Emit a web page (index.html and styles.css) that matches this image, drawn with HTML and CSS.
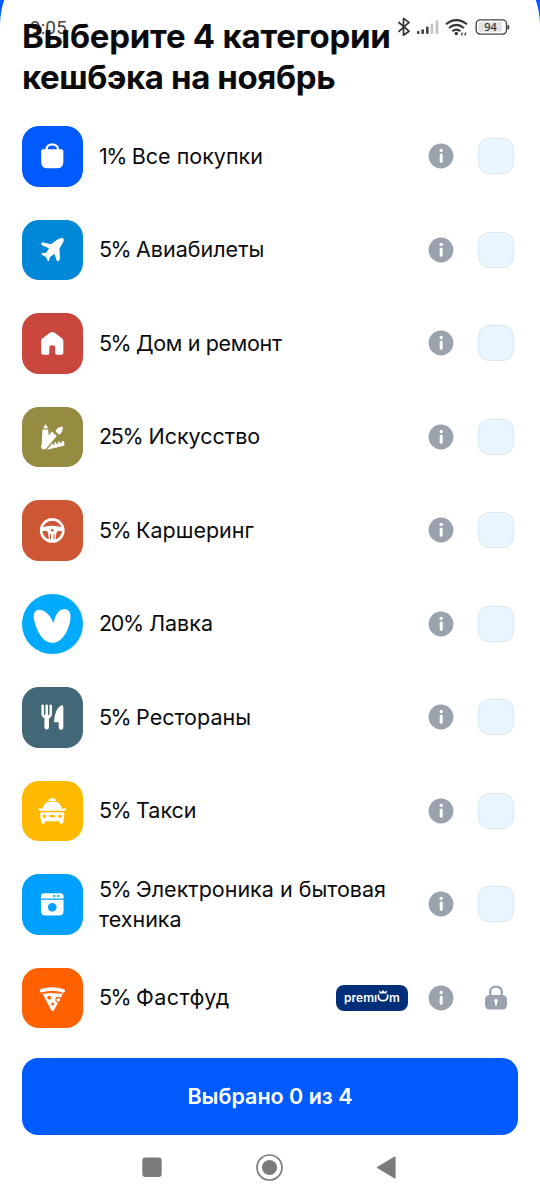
FILE: index.html
```html
<!DOCTYPE html>
<html lang="ru">
<head>
<meta charset="utf-8">
<title>Категории кешбэка</title>
<link rel="stylesheet" href="styles.css">
</head>
<body>
<svg class="defs" width="0" height="0">
  <symbol id="info" viewBox="0 0 26 26"><circle cx="13" cy="13" r="12.4" fill="#99a2ad"/><circle cx="13.2" cy="7.4" r="1.7" fill="#fff"/><path d="M13.2 12v6.2" stroke="#fff" stroke-width="3" stroke-linecap="round"/></symbol>
</svg>
<main class="sheet">
  <div class="status">
    <span class="time">9:05</span>
    <svg class="status-icons" width="116" height="22" viewBox="395 16 116 22">
      <path d="M398.400 22l10.600 9.200-5.500 4V18.400l5.500 4-10.600 9.400" fill="none" stroke="#333" stroke-width="1.700" stroke-linejoin="round"/>
      <g fill="#444"><rect x="417" y="31" width="2.600" height="3" rx="1"/><rect x="421.400" y="29.200" width="2.600" height="4.800" rx="1"/><rect x="426" y="26.500" width="2.600" height="7.500" rx="1"/></g>
      <g fill="#c4c4c4"><rect x="430.600" y="23.400" width="2.600" height="10.600" rx="1"/><rect x="435.600" y="20.600" width="2.700" height="13.400" rx="1"/></g>
      <g fill="none" stroke="#333" stroke-width="2"><path d="M446 24.300Q456.300 16 467 24.300"/><path d="M449 28Q456.300 21.800 464 28"/><path d="M452.300 31.300Q456.300 28 460.400 31.300"/></g>
      <circle cx="456.300" cy="33.500" r="1.700" fill="#333"/><path d="M461.500 35.500l1-3M464.800 35.500l1-3" fill="none" stroke="#555" stroke-width="1.500"/>
      <rect x="476.200" y="19.900" width="30.300" height="14.200" rx="4" fill="#fff" stroke="#444" stroke-width="1.400"/><rect x="478.500" y="22" width="23.500" height="10" rx="2" fill="#e2e2e2"/><rect x="507.300" y="25" width="2" height="4.500" rx="1" fill="#444"/>
      <text x="484.300" y="31" class="charge">94</text>
    </svg>
  </div>
  <h1 class="title"><span class="t1">Выберите 4 категории</span><br><span class="t2">кешбэка на ноябрь</span></h1>
  <ul class="list">
    <li class="row">
      <svg class="icon bag" viewBox="0 0 60 60"><path d="M24.300 26v-2.500c0-7 11.400-7 11.400 0V26" fill="none" stroke="#fff" stroke-width="2.200"/><path d="M19 25q0-2 2-2h18q2 0 2 2v10.500q0 6.500-6.500 6.500h-9Q19 42 19 35.500z" fill="#fff"/></svg>
      <span class="label"><span class="pct">1%</span> Все покупки</span><svg class="info"><use href="#info"/></svg><span class="check"></span>
    </li>
    <li class="row">
      <svg class="icon plane" viewBox="0 0 60 60"><path d="M28.800 24L34.800 19.600Q38.500 17.200 40.800 18.200Q42.300 20 40 23.600L37.200 28.200L37.600 38.500Q37.400 40.800 35.800 41Q34.600 41 34.200 39.600L32.200 33.600L27.800 36.600L27 40Q26.200 41.600 25.200 40L23.800 36.800L20 34.800Q18.600 33.600 20 32.800L24 32.400L26.800 28L20.400 25.400Q18.400 24 19.400 22.600Q20 22 21.400 22.200z" fill="#fff"/></svg>
      <span class="label"><span class="pct">5%</span> Авиабилеты</span><svg class="info"><use href="#info"/></svg><span class="check"></span>
    </li>
    <li class="row">
      <svg class="icon home" viewBox="0 0 60 60"><path d="M19 28q0-1.800 1.400-3l7.200-5.400q2.400-1.500 4.800 0l7.200 5.400Q41 26.200 41 28v11.500q0 2-2 2h-4.600q-1.500 0-1.500-1.500v-5.500q0-2.400-2.900-2.400t-2.900 2.400V40q0 1.500-1.500 1.500H21q-2 0-2-2z" fill="#fff"/></svg>
      <span class="label"><span class="pct">5%</span> <span class="tight">Дом и ремонт</span></span><svg class="info"><use href="#info"/></svg><span class="check"></span>
    </li>
    <li class="row">
      <svg class="icon art" viewBox="0 0 60 60"><g fill="#fff"><path d="M23.300 16.800l2.600 4.200h-5z"/><path d="M20.200 22.200h5.800l.5 6.200-7 9.400z"/><path d="M29.600 24.300l4.900 4.400-10.300 12.200q-2.200 2-4.500.5-1.400-2-.1-4.200z"/><path d="M33.400 24.200q1-4.200 7-4.900.4 6.200-3.600 8.100z"/><path d="M24.600 42.300l5.600-6.400.8 1.600 1.500-.3-.5-2 1.700-.4.700 2 1.600-.4-.6-2 1.600-.5.800 2 1.700-.3-.6-1.400 2-.4q1 .4 1.200 2.200.4 2.200-1.300 2.800z"/></g></svg>
      <span class="label"><span class="pct two">25%</span> Искусство</span><svg class="info"><use href="#info"/></svg><span class="check"></span>
    </li>
    <li class="row">
      <svg class="icon wheel" viewBox="0 0 60 60"><circle cx="30" cy="30.200" r="11" fill="none" stroke="#fff" stroke-width="2.600"/><path d="M19.500 27.300q10.500-3.600 21 0v3.500h-4.200q-1.800 0-2.200 2l-.9 8h-6.400l-.9-8q-.4-2-2.200-2h-4.200z" fill="#fff"/><circle cx="30" cy="30" r="1.300" fill="#cd5734"/><path d="M28.300 34v5M31.700 34v5" stroke="#cd5734"/></svg>
      <span class="label"><span class="pct">5%</span> Каршеринг</span><svg class="info"><use href="#info"/></svg><span class="check"></span>
    </li>
    <li class="row">
      <svg class="icon heart" viewBox="0 0 60 60"><path d="M31.300 28.800C28.500 22 23 15 16.500 15.600 11 16.500 11 22 12.300 27c2.200 9 8 21.400 17.900 21.400 11.500 0 18.300-17.300 17.900-26.900C48 17 45 14.800 41.200 15 35.500 15.500 33 21.500 31.300 28.800z" fill="#fff"/></svg>
      <span class="label"><span class="pct two">20%</span> Лавка</span><svg class="info"><use href="#info"/></svg><span class="check"></span>
    </li>
    <li class="row">
      <svg class="icon food" viewBox="0 0 60 60"><path d="M20.500 18.500v8q0 3.500 4 3.500t4-3.500v-8M24.500 18.500v10" fill="none" stroke="#fff" stroke-width="2.500" stroke-linecap="round"/><path d="M24.500 29v11" stroke="#fff" stroke-width="4.500" stroke-linecap="round"/><path d="M41 20v20.500q0 2-2.300 2t-2.300-2V35h-4q-.7 0-.6-1 .8-12 6.800-15.600Q41 17.500 41 20z" fill="#fff"/></svg>
      <span class="label"><span class="pct">5%</span> Рестораны</span><svg class="info"><use href="#info"/></svg><span class="check"></span>
    </li>
    <li class="row">
      <svg class="icon taxi" viewBox="0 0 60 60"><path d="M26.300 19.800q0-2.800 3.700-2.800t3.700 2.800z" fill="#fff"/><path d="M26.500 20.500h7q3.200.3 4.800 3.500l1.400 3.500 3.500-.4q.8.200.3 1.300-.6 1.200-2 1.200h-23q-1.400 0-2-1.200-.5-1.100.3-1.300l3.500.4 1.400-3.500q1.600-3.200 4.800-3.500z" fill="#fff"/><path d="M18.800 31h22.400q.8 1.500.8 3.500l-1 6.400q-.3 1.600-2 1.600t-1.800-1.700V40H22.800v.8q-.1 1.700-1.800 1.700t-2-1.600l-1-6.400q0-2 .8-3.500z" fill="#fff"/><g fill="#ffba00"><circle cx="22.300" cy="34.900" r="1.700"/><circle cx="37.700" cy="34.900" r="1.700"/><rect x="26.800" y="33.800" width="6.400" height="2.200" rx="1.100"/></g></svg>
      <span class="label"><span class="pct">5%</span> Такси</span><svg class="info"><use href="#info"/></svg><span class="check"></span>
    </li>
    <li class="row">
      <svg class="icon washer" viewBox="0 0 60 60"><path d="M18.800 24.200v-2q0-3.200 3.200-3.200h16q3.200 0 3.200 3.200v2zM18.800 25.600h22.400v11.100q0 4.500-4.500 4.500H23.300q-4.500 0-4.500-4.500z" fill="#fff"/><circle cx="30" cy="33" r="4.300" fill="#00a0ff"/><circle cx="32" cy="21.900" r="1.100" fill="#00a0ff"/><circle cx="36" cy="21.900" r="1.100" fill="#00a0ff"/></svg>
      <span class="label"><span class="pct">5%</span> Электроника и бытовая<br>техника</span><svg class="info"><use href="#info"/></svg><span class="check"></span>
    </li>
    <li class="row">
      <svg class="icon pizza" viewBox="0 0 60 60"><path d="M20 24.700l21-.2-9 17q-1.600 2.600-3.200 0z" fill="#fff"/><path d="M19.300 22.500q10.700-3.400 21.700.2" fill="none" stroke="#fff" stroke-width="3.300" stroke-linecap="round"/><path d="M20 25.300q10-2.400 20 .3" fill="none" stroke="#ff6000" stroke-width=".8"/><circle cx="27" cy="29.400" r="1.900" fill="#ff6000"/><circle cx="36" cy="31.500" r="2.400" fill="#fff" stroke="#ff6000" stroke-width="1.100"/><circle cx="30.500" cy="35.700" r="1.500" fill="#ff6000"/></svg>
      <span class="label"><span class="pct">5%</span> <span class="loose">Фастфуд</span></span>
      <span class="premium"><span>premı</span><svg width="12" height="13" viewBox="0 0 12 13"><path d="M1.400 4.600v1.800q0 4.300 4.600 4.300t4.600-4.300V4.600" fill="none" stroke="#fff" stroke-width="1.700"/><path d="M1.800.6l2.400 1.300L6 0l1.800 1.900L10.200.6 9.400 3.500H2.600z" fill="#fff"/></svg><span>m</span></span>
      <svg class="info"><use href="#info"/></svg>
      <svg class="lock" viewBox="0 0 36 36"><path d="M12.200 16v-4.200c0-7 11.600-7 11.600 0V16" fill="none" stroke="#99a2ad" stroke-width="2.300"/><rect x="7" y="15" width="22" height="14.500" rx="4.500" fill="#99a2ad"/><circle cx="18" cy="20.800" r="1.800" fill="#fff"/><path d="M18 21v3.700" stroke="#fff" stroke-width="2" stroke-linecap="round"/></svg>
    </li>
  </ul>
  <button class="submit"><span>Выбрано 0 из 4</span></button>
  <svg class="nav" width="540" height="65" viewBox="0 1135 540 65" fill="#7b7b7b"><rect x="142.300" y="1157.500" width="19.400" height="19.500" rx="3"/><circle cx="269.500" cy="1167.500" r="12.500" fill="none" stroke="#7b7b7b" stroke-width="1.700"/><circle cx="269.500" cy="1167.500" r="7.600"/><path d="M377.500 1167.500l17.500-10.500v21z" stroke="#7b7b7b" stroke-width="1.200" stroke-linejoin="round"/></svg>
</main>
</body>
</html>
```

FILE: styles.css
```css
* { box-sizing: border-box; }
body { margin: 0; background: #005bff; font-family: Inter, "Noto Sans", sans-serif; color: #0b0b0d; }
.defs { position: absolute; }
.sheet { position: relative; width: 540px; height: 1218px; margin-top: -18px; padding-top: 18px; overflow: hidden; background: #fff; border-radius: 22px 22px 0 0 / 44px 44px 0 0; }
.status { position: absolute; top: 34px; left: 30px; right: 29px; display: flex; justify-content: space-between; height: 22px; }
.time { font: 400 19px/23px Roboto, sans-serif; color: #444; }
.charge { font: 500 11px "Noto Sans", sans-serif; fill: #333; }
.title { position: relative; margin: 0; height: 109.5px; padding: 16px 0 0 22px; font-size: 33px; line-height: 41px; font-weight: 700; white-space: nowrap; }
.t1 { letter-spacing: -.25px; }
.t2 { letter-spacing: -.4px; }
.list { margin: 0; padding: 0; list-style: none; }
.row { display: flex; align-items: center; height: 93.5px; padding: 0 26px 0 22px; }
.icon { flex: none; width: 60.5px; height: 60.5px; border-radius: 17px; margin-right: 16.5px; }
.bag { background: #005bff; }
.plane { background: #0088d8; }
.home { background: #c9473c; }
.art { background: #958c42; }
.wheel { background: #cd5734; }
.heart { background: #00aaff; border-radius: 50%; }
.food { background: #426777; }
.taxi { background: #ffba00; }
.washer { background: #00a0ff; }
.pizza { background: #ff6000; }
.label { flex: 1; font-size: 21.5px; line-height: 30px; white-space: nowrap; margin-top: -1px; }
.pct { letter-spacing: -1.6px; }
.pct.two { letter-spacing: -1.3px; }
.tight { letter-spacing: -.35px; }
.loose { letter-spacing: .4px; }
.info { flex: none; width: 26px; height: 26px; margin-right: 24px; }
.check { flex: none; width: 36px; height: 36px; border: 1px solid #dce6ed; border-radius: 11px; background: #eaf6ff; }
.lock { flex: none; width: 36px; height: 36px; }
.premium { display: flex; align-items: center; justify-content: center; width: 72px; height: 26px; border-radius: 8px; background: #002f7a; color: #fff; font-size: 12px; font-weight: 600; margin-right: 20px; line-height: 20px; }
.premium svg { margin-top: -3px; }
.submit { display: flex; align-items: center; justify-content: center; width: 496px; height: 76.5px; margin: 13.5px 22px 0; border: 0; border-radius: 16px; padding: 0 0 1px; background: #005bff; color: #fff; font: 600 21.5px/30px Inter, sans-serif; }
.nav { display: block; }
```
